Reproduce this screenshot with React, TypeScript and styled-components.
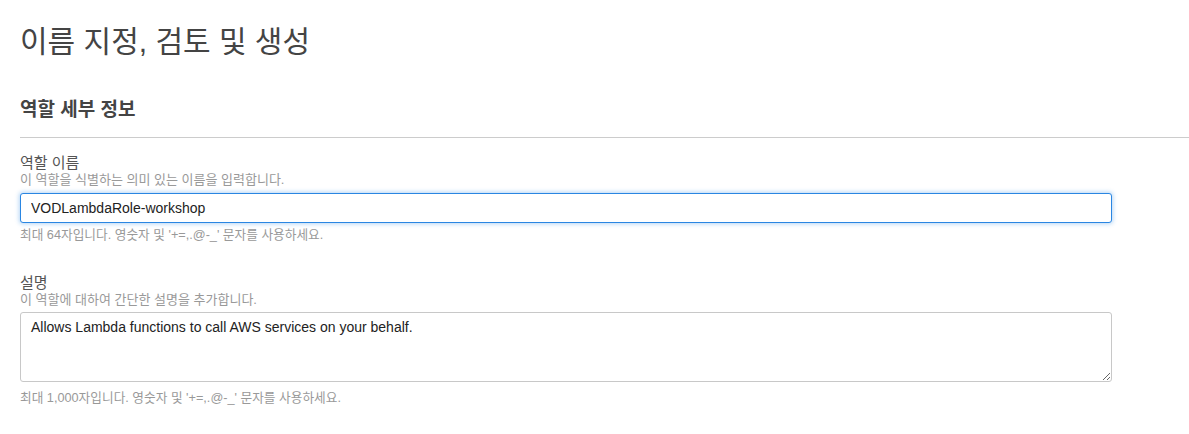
import React from "react";
import styled, { createGlobalStyle } from "styled-components";

const Global = createGlobalStyle`
  html, body { margin: 0; padding: 0; background: #fff; }
  body { font-family: "Liberation Sans", "Noto Sans CJK KR", Arial, sans-serif; color: #444; }
  * { box-sizing: border-box; }
`;

const Page = styled.div`
  padding: 22px 0 0 20px;
  display: flex;
  flex-direction: column;
`;

const Title = styled.h1`
  margin: 0;
  font-size: 30px;
  line-height: 40px;
  font-weight: 400;
  color: #444;
`;

const SectionTitle = styled.h2`
  margin: 36px 0 0;
  font-size: 19px;
  line-height: 24px;
  font-weight: 700;
  color: #444;
`;

const Divider = styled.hr`
  margin: 15px 0 0;
  border: 0;
  border-top: 1px solid #cccccc;
  height: 0;
`;

const Field = styled.div<{ $gap: number }>`
  margin-top: ${(p) => p.$gap}px;
  width: 1092px;
  display: flex;
  flex-direction: column;
`;

const Label = styled.label`
  font-size: 15px;
  line-height: 18px;
  color: #555;
`;

const Hint = styled.div`
  font-size: 13px;
  line-height: 16px;
  color: #999;
`;

const Constraint = styled.div<{ $top: number }>`
  margin-top: ${(p) => p.$top}px;
  font-size: 12.7px;
  line-height: 16px;
  color: #999;
`;

const Input = styled.input`
  margin-top: 5px;
  width: 100%;
  height: 30px;
  padding: 0 10px;
  font-family: inherit;
  font-size: 14px;
  color: #222;
  border: 1px solid #2a86e2;
  border-radius: 3px;
  box-shadow: 0 0 4px 1px rgba(42, 134, 226, 0.35);
  outline: none;
`;

const TextArea = styled.textarea`
  margin-top: 4px;
  width: 100%;
  height: 70px;
  padding: 5px 10px;
  font-family: inherit;
  font-size: 14px;
  line-height: 18px;
  color: #222;
  border: 1px solid #c8c8c8;
  border-radius: 3px;
  resize: both;
  outline: none;
`;

export default function App() {
  return (
    <>
      <Global />
      <Page>
        <Title>이름 지정, 검토 및 생성</Title>
        <SectionTitle>역할 세부 정보</SectionTitle>
        <Divider />
        <Field $gap={16}>
          <Label>역할 이름</Label>
          <Hint>이 역할을 식별하는 의미 있는 이름을 입력합니다.</Hint>
          <Input defaultValue="VODLambdaRole-workshop" />
          <Constraint $top={4}>최대 64자입니다. 영숫자 및 '+=,.@-_' 문자를 사용하세요.</Constraint>
        </Field>
        <Field $gap={31}>
          <Label>설명</Label>
          <Hint>이 역할에 대하여 간단한 설명을 추가합니다.</Hint>
          <TextArea defaultValue="Allows Lambda functions to call AWS services on your behalf." />
          <Constraint $top={8}>최대 1,000자입니다. 영숫자 및 '+=,.@-_' 문자를 사용하세요.</Constraint>
        </Field>
      </Page>
    </>
  );
}
